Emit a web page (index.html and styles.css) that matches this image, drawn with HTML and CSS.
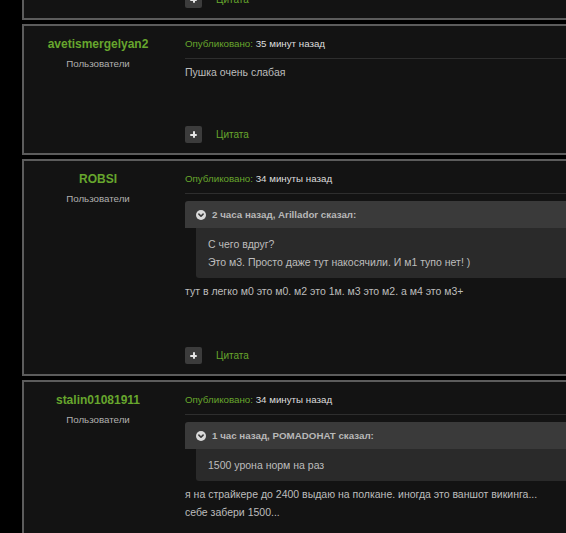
FILE: index.html
```html
<!DOCTYPE html>
<html lang="ru">
<head>
<meta charset="utf-8">
<title>Тема</title>
<link rel="stylesheet" href="styles.css">
</head>
<body>
<div class="topic">
  <article class="post post-partial">
    <div class="author"></div>
    <div class="main">
      <div class="actions">
        <span class="plus"></span>
        <a class="quote-link">Цитата</a>
      </div>
    </div>
  </article>

  <article class="post">
    <div class="author">
      <div class="name">avetismergelyan2</div>
      <div class="group">Пользователи</div>
    </div>
    <div class="main">
      <div class="meta"><span class="label">Опубликовано:</span> 35 минут назад</div>
      <div class="content">
        <p>Пушка очень слабая</p>
      </div>
      <div class="actions">
        <span class="plus"></span>
        <a class="quote-link">Цитата</a>
      </div>
    </div>
  </article>

  <article class="post">
    <div class="author">
      <div class="name">ROBSI</div>
      <div class="group">Пользователи</div>
    </div>
    <div class="main">
      <div class="meta"><span class="label">Опубликовано:</span> 34 минуты назад</div>
      <div class="content content-quoted">
        <blockquote class="quote">
          <div class="quote-head">
            <svg class="chev" viewBox="0 0 10 10" width="10" height="10"><circle cx="5" cy="5" r="5" fill="#d9d9d9"/><path d="M2.9 4.1 L5 6.2 L7.1 4.1" fill="none" stroke="#3b3b3b" stroke-width="1.6" stroke-linecap="round" stroke-linejoin="round"/></svg>
            <span>2 часа назад, Arillador сказал:</span>
          </div>
          <div class="quote-body">
            <p>С чего вдруг?</p>
            <p>Это м3. Просто даже тут накосячили. И м1 тупо нет! )</p>
          </div>
        </blockquote>
        <p>тут в легко м0 это м0. м2 это 1м. м3 это м2. а м4 это м3+</p>
      </div>
      <div class="actions">
        <span class="plus"></span>
        <a class="quote-link">Цитата</a>
      </div>
    </div>
  </article>

  <article class="post">
    <div class="author">
      <div class="name">stalin01081911</div>
      <div class="group">Пользователи</div>
    </div>
    <div class="main">
      <div class="meta"><span class="label">Опубликовано:</span> 34 минуты назад</div>
      <div class="content content-quoted">
        <blockquote class="quote">
          <div class="quote-head">
            <svg class="chev" viewBox="0 0 10 10" width="10" height="10"><circle cx="5" cy="5" r="5" fill="#d9d9d9"/><path d="M2.9 4.1 L5 6.2 L7.1 4.1" fill="none" stroke="#3b3b3b" stroke-width="1.6" stroke-linecap="round" stroke-linejoin="round"/></svg>
            <span>1 час назад, POMADOHAT сказал:</span>
          </div>
          <div class="quote-body">
            <p>1500 урона норм на раз</p>
          </div>
        </blockquote>
        <p>я на страйкере до 2400 выдаю на полкане. иногда это ваншот викинга...</p>
        <p>себе забери 1500...</p>
      </div>
      <div class="actions">
        <span class="plus"></span>
        <a class="quote-link">Цитата</a>
      </div>
    </div>
  </article>
</div>
</body>
</html>
```

FILE: styles.css
```css
html, body {
  margin: 0;
  padding: 0;
  background: #000;
  overflow: hidden;
}
body {
  font-family: "Liberation Sans", Arial, sans-serif;
  font-size: 10px;
  color: #bdbdbd;
}
.topic {
  margin-top: -11px;
  margin-left: 22px;
  width: 600px;
  display: flex;
  flex-direction: column;
  gap: 4px;
}
.post {
  background: #131313;
  border: 2px solid #5c5c5c;
  display: grid;
  grid-template-columns: 148px 1fr;
}
.author {
  padding-top: 10px;
  text-align: center;
}
.name {
  color: #67a62d;
  font-weight: bold;
  font-size: 12px;
  line-height: 16px;
}
.group {
  color: #b0b0b0;
  font-size: 9.75px;
  line-height: 12px;
  margin-top: 6px;
}
.main {
  padding: 11px 0 10px 13px;
}
.post-partial .main {
  padding-top: 0;
}
.meta {
  line-height: 14px;
  color: #dedede;
  font-size: 9.75px;
  padding-bottom: 7px;
  border-bottom: 1px solid #2e2e2e;
}
.meta .label {
  color: #67a62d;
}
.content {
  padding-top: 4px;
  min-height: 18px;
  margin-bottom: 45px;
  font-size: 10.5px;
}
.content-quoted {
  margin-bottom: 47px;
}
.content p {
  margin: 0;
  line-height: 18px;
}
.quote {
  margin: 3px 0 4px 0;
}
.quote-head {
  background: #3a3a3a;
  border-radius: 3px 0 0 0;
  height: 27px;
  display: flex;
  align-items: center;
  gap: 6px;
  padding-left: 11px;
  font-weight: bold;
  font-size: 9.75px;
  color: #b8b8b8;
}
.chev {
  display: block;
}
.quote-body {
  margin-left: 11px;
  background: #2a2a2a;
  border-radius: 0 0 0 3px;
  padding: 7px 12px;
  color: #bdbdbd;
}
.actions {
  display: flex;
  align-items: center;
  height: 17px;
}
.plus {
  width: 17px;
  height: 17px;
  border-radius: 2px;
  background: #3c3c3c;
  position: relative;
}
.plus::before,
.plus::after {
  content: "";
  position: absolute;
  background: #e6e6e6;
  border-radius: 1px;
}
.plus::before {
  left: 5px;
  top: 7.5px;
  width: 7px;
  height: 2px;
}
.plus::after {
  left: 7.5px;
  top: 5px;
  width: 2px;
  height: 7px;
}
.quote-link {
  margin-left: 14px;
  color: #67a62d;
}
```
